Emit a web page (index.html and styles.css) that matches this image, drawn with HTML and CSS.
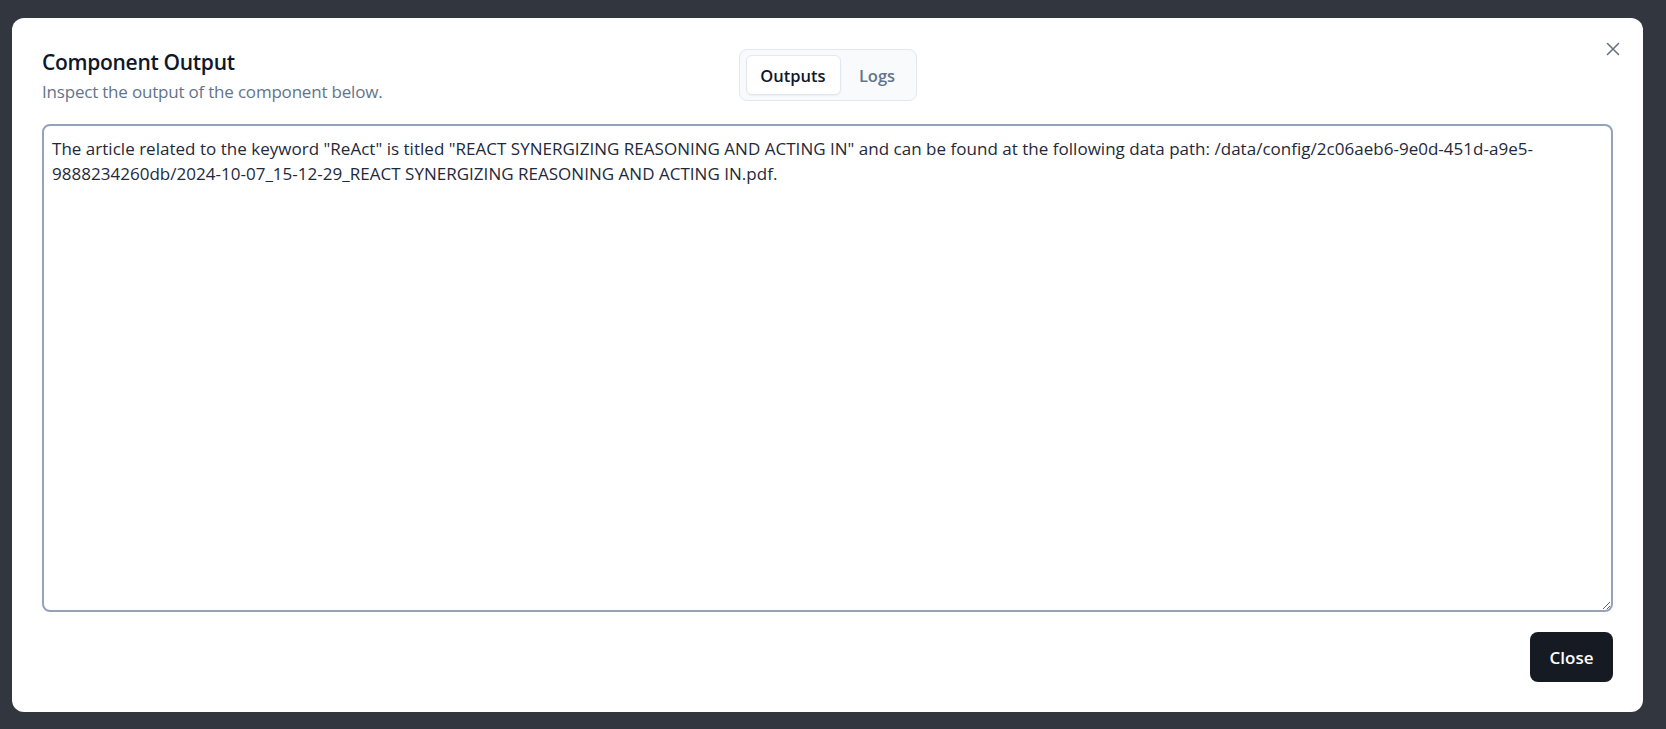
FILE: index.html
```html
<!DOCTYPE html>
<html lang="en">
<head>
<meta charset="utf-8">
<title>Component Output</title>
<link rel="stylesheet" href="styles.css">
</head>
<body>
<div class="overlay">
  <div class="dialog">
    <div class="header">
      <div class="titles">
        <h2 class="title">Component Output</h2>
        <p class="subtitle">Inspect the output of the component below.</p>
      </div>
      <div class="tabs">
        <button class="tab active">Outputs</button>
        <button class="tab">Logs</button>
      </div>
      <div class="spacer"></div>
    </div>
    <button class="close-x" aria-label="Close">
      <svg width="14" height="14" viewBox="0 0 14 14" fill="none" stroke="currentColor" stroke-width="1.6" stroke-linecap="round"><path d="M1.5 1.5 L12.5 12.5 M12.5 1.5 L1.5 12.5"/></svg>
    </button>
    <textarea class="output" readonly>The article related to the keyword "ReAct" is titled "REACT SYNERGIZING REASONING AND ACTING IN" and can be found at the following data path: /data/config/2c06aeb6-9e0d-451d-a9e5-
9888234260db/2024-10-07_15-12-29_REACT SYNERGIZING REASONING AND ACTING IN.pdf.</textarea>
    <div class="footer">
      <button class="btn-close">Close</button>
    </div>
  </div>
</div>
</body>
</html>
```

FILE: styles.css
```css
* { box-sizing: border-box; }
html, body { margin: 0; padding: 0; }
body {
  background: #32363f;
  width: 1666px;
  height: 729px;
  overflow: hidden;
  font-family: "Open Sans", "Noto Sans", sans-serif;
}
.overlay {
  padding: 18px 23px 17px 12px;
}
.dialog {
  position: relative;
  width: 1631px;
  height: 694px;
  background: #ffffff;
  border-radius: 12px;
  padding: 30px;
  display: flex;
  flex-direction: column;
}
.header {
  display: grid;
  grid-template-columns: 1fr auto 1fr;
  align-items: start;
  height: 76px;
}
.title {
  margin: 0;
  font-size: 21px;
  font-weight: 600;
  color: #0f172a;
  line-height: 28px;
  letter-spacing: -0.3px;
}
.subtitle {
  margin: 4px 0 0 0;
  font-size: 17px;
  line-height: 24px;
  color: #64748b;
  letter-spacing: -0.2px;
}
.tabs {
  margin-top: 1px;
  display: flex;
  width: 178px;
  height: 52px;
  padding: 5px 6px;
  background: #f8fafc;
  border: 1px solid #e2e8f0;
  border-radius: 8px;
}
.tab {
  border: 1px solid transparent;
  background: transparent;
  font-family: inherit;
  font-size: 16.5px;
  font-weight: 600;
  color: #64748b;
  border-radius: 6px;
  padding: 0;
  height: 40px;
  cursor: pointer;
}
.tab.active {
  flex: 0 0 95px;
  background: #ffffff;
  color: #0f172a;
  border-color: #e2e8f0;
  box-shadow: 0 1px 2px rgba(15, 23, 42, 0.06);
}
.tab:not(.active) {
  flex: 1 1 auto;
  padding-left: 4px;
}
.close-x {
  position: absolute;
  top: 21px;
  right: 20px;
  width: 20px;
  height: 20px;
  padding: 3px;
  border: none;
  background: transparent;
  color: #6b7280;
  display: flex;
  align-items: center;
  justify-content: center;
}
.output {
  display: block;
  width: 1571px;
  height: 488px;
  border: 2px solid #94a3b8;
  border-radius: 8px;
  padding: 10px 8px 6px 8px;
  font-family: "Open Sans", "Noto Sans", sans-serif;
  font-size: 17px;
  line-height: 25px;
  letter-spacing: 0.02px;
  color: #1e293b;
  resize: both;
  outline: none;
  white-space: pre-wrap;
  overflow: hidden;
}
.footer {
  display: flex;
  justify-content: flex-end;
  margin-top: 20px;
}
.btn-close {
  width: 83px;
  height: 50px;
  border: none;
  border-radius: 8px;
  background: #161a23;
  color: #ffffff;
  font-family: inherit;
  font-size: 17px;
  font-weight: 600;
  cursor: pointer;
}
```
